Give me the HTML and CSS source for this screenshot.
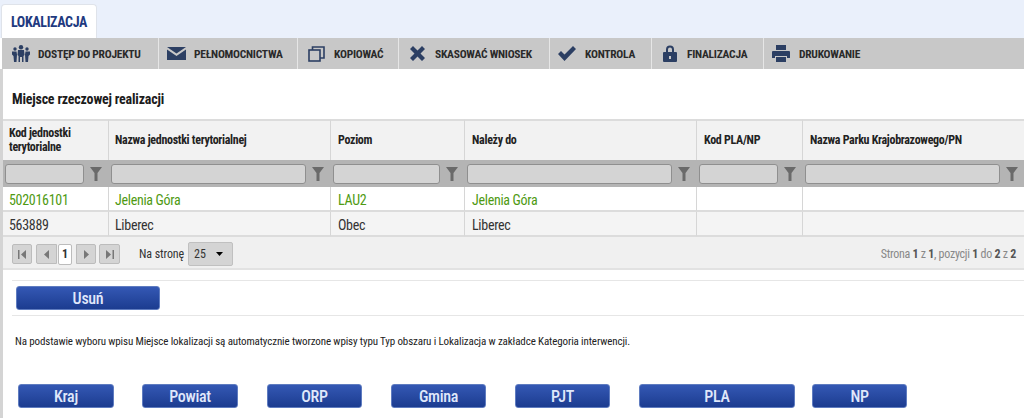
FILE: index.html
```html
<!DOCTYPE html>
<html>
<head>
    <title>Lokalizacja</title>
    <meta charset="UTF-8">
    <link rel="stylesheet" href="styles.css">
</head>
<body>
    <div class="tabs">
        <div class="tab">LOKALIZACJA</div>
    </div>

    <div class="toolbar">
        <div class="tool tool-access">
            <svg width="18" height="17" viewBox="0 0 18 17"><g fill="#2c3f63"><circle cx="3" cy="4" r="1.700"/><circle cx="9" cy="2.200" r="2.200"/><circle cx="15" cy="4" r="1.700"/><path d="M0 6.500h4.500L5 9.500 4.500 17H2L1.500 11 0 9.500zM6 5h6l.5 5-1 1v6H10v-5H8v5H6.500v-6l-1-1zM13.500 6.500H18v3L16.500 11 16 17h-2.500L13 9.500z"/></g></svg>
            <span>DOSTĘP DO PROJEKTU</span>
        </div>
        <div class="tool tool-mail">
            <svg width="19" height="13" viewBox="0 0 19 13"><path fill="#2c3f63" d="M0 0h19L9.500 6.500zM0 2.500l9.500 6.500L19 2.500V13H0z"/></svg>
            <span>PEŁNOMOCNICTWA</span>
        </div>
        <div class="tool tool-copy">
            <svg width="17" height="16" viewBox="0 0 17 16"><g fill="none" stroke="#2c3f63" stroke-width="1.600"><rect x="1" y="4" width="11" height="11"/><path d="M4.500 4V1h11.500v11h-4"/></g></svg>
            <span>KOPIOWAĆ</span>
        </div>
        <div class="tool tool-delete">
            <svg width="15" height="15" viewBox="0 0 15 15"><path fill="#2c3f63" d="M3 0l4.500 4.500L12 0l3 3-4.500 4.500L15 12l-3 3-4.500-4.500L3 15l-3-3 4.500-4.500L0 3z"/></svg>
            <span>SKASOWAĆ WNIOSEK</span>
        </div>
        <div class="tool tool-check">
            <svg width="18" height="15" viewBox="0 0 18 15"><path fill="#2c3f63" d="M0 8l3-3 3.500 3.500L15 0l3 3L6.500 15z"/></svg>
            <span>KONTROLA</span>
        </div>
        <div class="tool tool-lock">
            <svg width="14" height="17" viewBox="0 0 14 17"><path fill="#2c3f63" fill-rule="evenodd" d="M3 7V4.500a4 4 0 0 1 8 0V7h2a1 1 0 0 1 1 1v8a1 1 0 0 1-1 1H1a1 1 0 0 1-1-1V8a1 1 0 0 1 1-1zM5 7h4V4.500a2 2 0 0 0-4 0zM6 11v3h2v-3z"/></svg>
            <span>FINALIZACJA</span>
        </div>
        <div class="tool tool-print">
            <svg width="18" height="17" viewBox="0 0 18 17"><path fill="#2c3f63" fill-rule="evenodd" d="M4 0h10v5H4zM1 6h16a1 1 0 0 1 1 1v6h-3v-2H3v2H0V7a1 1 0 0 1 1-1zM4 12h10v5H4z"/></svg>
            <span>DRUKOWANIE</span>
        </div>
    </div>

    <div class="content">
        <h3 class="section-title">Miejsce rzeczowej realizacji</h3>

        <table class="grid">
            <colgroup>
                <col class="c1"><col class="c2"><col class="c3"><col class="c4"><col class="c5"><col class="c6">
            </colgroup>
            <thead>
                <tr class="head-row">
                    <th>Kod jednostki<br>terytorialne</th>
                    <th>Nazwa jednostki terytorialnej</th>
                    <th>Poziom</th>
                    <th>Należy do</th>
                    <th>Kod PLA/NP</th>
                    <th>Nazwa Parku Krajobrazowego/PN</th>
                </tr>
                <tr class="filter-row">
                    <td><div class="filter"><div class="filter-input"></div><svg class="funnel" viewBox="0 0 12 14"><path d="M0 0h12L7.500 6v8h-3V6z"/></svg></div></td>
                    <td><div class="filter"><div class="filter-input"></div><svg class="funnel" viewBox="0 0 12 14"><path d="M0 0h12L7.500 6v8h-3V6z"/></svg></div></td>
                    <td><div class="filter"><div class="filter-input"></div><svg class="funnel" viewBox="0 0 12 14"><path d="M0 0h12L7.500 6v8h-3V6z"/></svg></div></td>
                    <td><div class="filter"><div class="filter-input"></div><svg class="funnel" viewBox="0 0 12 14"><path d="M0 0h12L7.500 6v8h-3V6z"/></svg></div></td>
                    <td><div class="filter"><div class="filter-input"></div><svg class="funnel" viewBox="0 0 12 14"><path d="M0 0h12L7.500 6v8h-3V6z"/></svg></div></td>
                    <td><div class="filter"><div class="filter-input"></div><svg class="funnel" viewBox="0 0 12 14"><path d="M0 0h12L7.500 6v8h-3V6z"/></svg></div></td>
                </tr>
            </thead>
            <tbody>
                <tr class="row-selected">
                    <td>502016101</td><td>Jelenia Góra</td><td>LAU2</td><td>Jelenia Góra</td><td></td><td></td>
                </tr>
                <tr class="row-alt">
                    <td>563889</td><td>Liberec</td><td>Obec</td><td>Liberec</td><td></td><td></td>
                </tr>
            </tbody>
        </table>

        <div class="pager">
            <div class="pager-left">
                <div class="page-btn page-first"><svg width="8" height="9" viewBox="0 0 8 9"><path d="M0 0h1.500v9H0zM8 0v9L3 4.500z"/></svg></div>
                <div class="page-btn page-prev"><svg width="5" height="9" viewBox="0 0 5 9"><path d="M5 0v9L0 4.500z"/></svg></div>
                <div class="page-num">1</div>
                <div class="page-btn page-next"><svg width="5" height="9" viewBox="0 0 5 9"><path d="M0 0v9l5-4.500z"/></svg></div>
                <div class="page-btn page-last"><svg width="8" height="9" viewBox="0 0 8 9"><path d="M0 0v9l5-4.500zM6.500 0H8v9H6.500z"/></svg></div>
                <span class="per-page">Na stronę</span>
                <div class="per-select"><span>25</span><svg width="7" height="4" viewBox="0 0 7 4"><path d="M0 0h7L3.500 4z"/></svg></div>
            </div>
            <div class="pager-info">Strona <b>1</b> z <b>1</b>, pozycji <b>1</b> do <b>2</b> z <b>2</b></div>
        </div>

        <div class="action-row">
            <button class="btn btn-delete">Usuń</button>
        </div>

        <p class="note">Na podstawie wyboru wpisu Miejsce lokalizacji są automatycznie tworzone wpisy typu Typ obszaru i Lokalizacja w zakładce Kategoria interwencji.</p>

        <div class="btn-row">
            <button class="btn btn-kraj">Kraj</button>
            <button class="btn btn-powiat">Powiat</button>
            <button class="btn">ORP</button>
            <button class="btn">Gmina</button>
            <button class="btn">PJT</button>
            <button class="btn btn-pla">PLA</button>
            <button class="btn">NP</button>
        </div>
    </div>
</body>
</html>
```

FILE: styles.css
```css
html, body {
    height: 100%;
}

body {
    margin: 0;
    overflow: hidden;
    background: #fff;
    color: #222;
    font-family: Roboto, "Liberation Sans", sans-serif;
    font-stretch: 75%;
    font-size: 12px;
}

.tabs {
    height: 38px;
    background: #eaf0fb;
    display: flex;
    align-items: flex-end;
    padding-left: 1px;
}

.tab {
    width: 96px;
    height: 34px;
    box-sizing: border-box;
    padding-top: 9px;
    background: #fff;
    border: 1px solid #dfe3ea;
    border-bottom: none;
    border-radius: 4px 4px 0 0;
    color: #1f3a80;
    font-size: 14px;
    font-weight: 700;
    letter-spacing: -0.35px;
    text-align: center;
}

.toolbar {
    height: 31px;
    margin-left: 2px;
    display: flex;
    background: #c8c8c8;
}

.tool {
    display: flex;
    align-items: center;
    box-sizing: border-box;
    flex: none;
    height: 100%;
    border-right: 1px solid #e6e6e6;
    font-size: 11.500px;
    font-weight: 700;
    letter-spacing: -0.25px;
    color: #2a2a2a;
}

.tool:last-child {
    border-right: none;
}

.tool-access { width: 157px; padding-left: 10px; gap: 8px; }
.tool-mail { width: 139px; padding-left: 8px; gap: 8px; }
.tool-copy { width: 101px; padding-left: 10px; gap: 9px; }
.tool-delete { width: 151px; padding-left: 11px; gap: 10px; }
.tool-check { width: 102px; padding-left: 8px; gap: 9px; }
.tool-lock { width: 112px; padding-left: 11px; gap: 10px; }
.tool-print { padding-left: 8px; gap: 9px; }

.content {
    height: 349px;
    border-left: 3px solid #d4d4d4;
    box-sizing: border-box;
}

.section-title {
    margin: 0;
    padding: 22px 0 0 9px;
    height: 50px;
    box-sizing: border-box;
    font-size: 14px;
    font-weight: 700;
    letter-spacing: -0.2px;
    color: #1c1c1c;
}

.grid {
    width: 1021px;
    table-layout: fixed;
    border-collapse: separate;
    border-spacing: 0;
}

.c1 { width: 105px; }
.c2 { width: 222px; }
.c3 { width: 134px; }
.c4 { width: 232px; }
.c5 { width: 106px; }
.c6 { width: 222px; }

.head-row th {
    height: 41px;
    box-sizing: border-box;
    padding: 0 6px 2px;
    background: #f2f2f2;
    border-top: 2px solid #dcdcdc;
    border-left: 1px solid #d6d6d6;
    text-align: left;
    font-size: 12px;
    line-height: 14px;
    font-weight: 700;
    letter-spacing: -0.3px;
    color: #222;
}

.head-row th:nth-child(n+3),
tbody td:nth-child(n+3) {
    padding-left: 7px;
}

.head-row th:first-child,
.filter-row td:first-child,
tbody td:first-child {
    border-left: none;
}

.filter-row td {
    height: 27px;
    padding: 0;
    background: #b4b4b4;
}

.filter {
    display: flex;
    align-items: center;
    gap: 6px;
    padding: 0 6px 0 3px;
}

.filter-row td:first-child .filter {
    padding-left: 2px;
}

.filter-input {
    flex: 1;
    height: 20px;
    box-sizing: border-box;
    background: #d4d4d4;
    border: 1px solid #8f8f8f;
    border-radius: 3px;
}

.funnel {
    width: 12px;
    height: 14px;
    fill: #6a6a6a;
    flex: none;
}

tbody td {
    height: 25px;
    padding: 2px 6px 0;
    box-sizing: border-box;
    border-left: 1px solid #d6d6d6;
    border-bottom: 2px solid #dcdcdc;
    font-size: 14px;
    letter-spacing: -0.3px;
    white-space: nowrap;
}

.row-selected td {
    background: #fff;
    color: #4f9a12;
}

.row-alt td {
    padding-top: 3px;
    background: #f4f4f4;
    color: #333;
}

.pager {
    height: 33px;
    box-sizing: border-box;
    display: flex;
    justify-content: space-between;
    align-items: center;
    padding: 3px 8px 0 9px;
    background: #f0f0f0;
    border-bottom: 2px solid #e2e2e2;
}

.pager-left {
    display: flex;
    align-items: center;
}

.page-btn {
    width: 20px;
    height: 20px;
    box-sizing: border-box;
    display: flex;
    align-items: center;
    justify-content: center;
    background: #d4d4d4;
    border: 1px solid #bcbcbc;
    border-radius: 2px;
    fill: #777;
}

.page-prev {
    width: 21px;
    margin-left: 4px;
    border-radius: 2px 0 0 2px;
}

.page-next {
    margin-left: 4px;
    border-radius: 0 2px 2px 0;
}

.page-last {
    margin-left: 3px;
    width: 21px;
}

.page-num {
    width: 14px;
    height: 21px;
    margin-left: 1px;
    box-sizing: border-box;
    background: #fff;
    border: 1px solid #bcbcbc;
    border-radius: 2px;
    text-align: center;
    line-height: 19px;
    font-weight: 700;
    color: #333;
}

.per-page {
    margin-left: 19px;
    letter-spacing: -0.1px;
    color: #333;
}

.per-select {
    width: 45px;
    height: 24px;
    margin-left: 4px;
    box-sizing: border-box;
    display: flex;
    align-items: center;
    justify-content: space-between;
    padding: 0 9px 0 5px;
    background: #d4d4d4;
    border: 1px solid #c0c0c0;
    border-radius: 2px;
    color: #333;
    font-size: 12px;
}

.pager-info {
    letter-spacing: -0.27px;
    color: #888;
}

.pager-info b {
    color: #555;
}

.action-row {
    margin: 10px 0 0 9px;
    padding: 5px 0 5px 4px;
    border-bottom: 1px solid #e6e6e6;
    border-top: 1px solid #e6e6e6;
}

.btn {
    display: block;
    width: 95px;
    height: 24px;
    padding: 0;
    background: linear-gradient(#3458b4, #1c3c90);
    border: 1px solid #5f7cc0;
    border-radius: 3px;
    color: #e0e8fb;
    font-family: inherit;
    font-stretch: 75%;
    font-size: 16px;
    font-weight: 500;
    letter-spacing: -0.3px;
}

.btn-delete {
    width: 144px;
}

.note {
    margin: 19px 0 0 12px;
    font-size: 11px;
    line-height: 13px;
    letter-spacing: -0.125px;
    color: #222;
}

.btn-row {
    display: flex;
    gap: 29px;
    margin: 36px 0 0 15px;
}

.btn-kraj,
.btn-powiat {
    width: 96px;
}

.btn-kraj {
    margin-right: -1px;
}

.btn-row .btn-pla {
    width: 156px;
    margin-right: -12px;
}
```
